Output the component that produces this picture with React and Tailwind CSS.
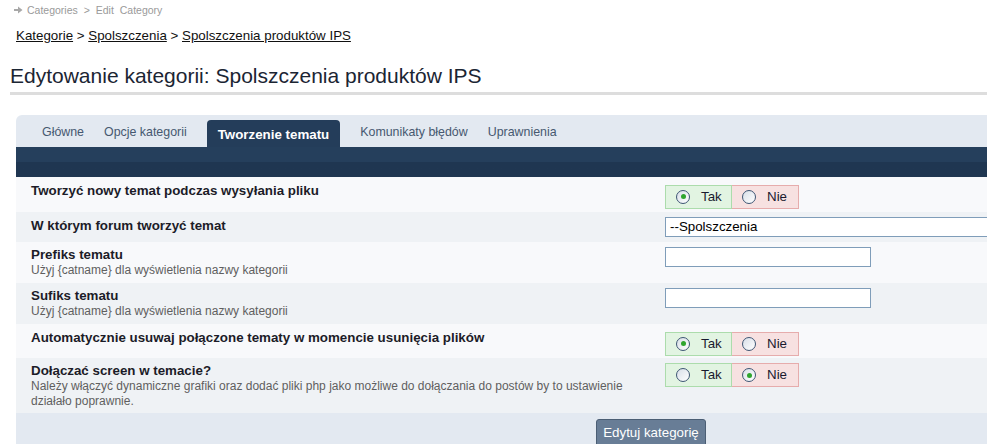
import React from "react";

const TABS = [
  { label: "Główne" },
  { label: "Opcje kategorii" },
  { label: "Tworzenie tematu", active: true },
  { label: "Komunikaty błędów" },
  { label: "Uprawnienia" },
];

const Radio = ({ checked }) => (
  <span className="inline-flex w-[14px] h-[14px] rounded-full border border-[#3e5674] bg-gradient-to-br from-[#d8dfe8] to-white items-center justify-center">
    {checked && <span className="w-[5px] h-[5px] rounded-full bg-[#2fa52f]" />}
  </span>
);

const YesNo = ({ value }) => (
  <div className="inline-flex h-[24px] text-[13.33px] text-[#1a1a2e]">
    <label className="flex items-center gap-[11px] w-[67px] pl-[10px] bg-[#e2f4e2] border border-[#acdcac]">
      <Radio checked={value} />
      Tak
    </label>
    <label className="flex items-center gap-[11px] w-[67px] pl-[10px] bg-[#f7e1e1] border border-l-0 border-[#e6acac]">
      <Radio checked={!value} />
      Nie
    </label>
  </div>
);

const Label = ({ title, desc }) => (
  <div>
    <div className="text-[13.33px] font-bold text-[#1c1c28] leading-[16px]">{title}</div>
    {desc && <div className="text-[12px] text-[#5f5f5f] leading-[15px]">{desc}</div>}
  </div>
);

const ROWS = [
  { title: "Tworzyć nowy temat podczas wysyłania pliku", field: <YesNo value />, h: "h-[35px]" },
  {
    title: "W którym forum tworzyć temat",
    field: (
      <div className="w-[400px] h-[20px] border border-[#7f9db9] bg-white text-[13.33px] leading-[18px] px-[4px] text-black">
        --Spolszczenia
      </div>
    ),
    h: "h-[30px]",
  },
  {
    title: "Prefiks tematu",
    desc: "Użyj {catname} dla wyświetlenia nazwy kategorii",
    field: <div className="w-[206px] h-[20px] border border-[#7f9db9] bg-white" />,
    h: "h-[41px]",
  },
  {
    title: "Sufiks tematu",
    desc: "Użyj {catname} dla wyświetlenia nazwy kategorii",
    field: <div className="w-[206px] h-[20px] border border-[#7f9db9] bg-white" />,
    h: "h-[41px]",
  },
  { title: "Automatycznie usuwaj połączone tematy w momencie usunięcia plików", field: <YesNo value />, h: "h-[34px]" },
  {
    title: "Dołączać screen w temacie?",
    desc: "Należy włączyć dynamiczne grafiki oraz dodać pliki php jako możliwe do dołączania do postów by to ustawienie działało poprawnie.",
    field: <YesNo value={false} />,
    h: "h-[55px]",
  },
];

export default function App() {
  return (
    <div className="w-[987px] h-[444px] overflow-hidden bg-white" style={{ fontFamily: "'Liberation Sans', Arial, sans-serif" }}>
      <div className="pt-[3px] pl-[14px] flex items-center gap-[4px] text-[10.5px] leading-[14px] text-[#9a9a9a]">
        <svg width="9" height="8" viewBox="0 0 9 8">
          <path d="M0 3h4V0.5L8.5 4 4 7.5V5H0z" fill="#a8a8a8" />
        </svg>
        <span className="[word-spacing:3px]">Categories &gt; Edit Category</span>
      </div>

      <div className="mt-[11px] pl-[16px] text-[13.33px] leading-[16px] text-[#111]">
        <a className="underline">Kategorie</a> &gt; <a className="underline">Spolszczenia</a> &gt;{" "}
        <a className="underline">Spolszczenia produktów IPS</a>
      </div>

      <h1 className="mt-[20px] ml-[10px] pb-[4px] border-b-[3px] border-[#dddddd] text-[21px] leading-[24px] text-[#1b2533]">
        Edytowanie kategorii: Spolszczenia produktów IPS
      </h1>

      <div className="mt-[20px] ml-[16px] w-[1270px]">
        <div className="h-[32px] bg-[#e3e9f1] rounded-tl-[6px] pl-[16px] flex items-end">
          {TABS.map((t) =>
            t.active ? (
              <div key={t.label} className="h-[27px] mx-[10px] px-[11px] bg-[#243d5a] rounded-t-[4px] text-white font-bold text-[13.33px] flex items-center pt-[3px]">
                {t.label}
              </div>
            ) : (
              <div key={t.label} className="h-[27px] px-[10px] text-[12.4px] text-[#465870] flex items-start pt-[3px]">
                {t.label}
              </div>
            )
          )}
        </div>
        <div className="h-[30px] bg-gradient-to-b from-[#253f5c] from-50% to-[#1f3651] to-50%" />

        {ROWS.map((r, i) => (
          <div key={i} className={`flex ${r.h} ${i % 2 === 0 ? "bg-[#f8f9fb]" : "bg-[#eff2f5]"}`}>
            <div className={`w-[649px] pl-[15px] pr-[10px] ${r.desc ? "pt-[5px]" : "pt-[6px]"}`}>
              <Label title={r.title} desc={r.desc} />
            </div>
            <div className="flex-1 pt-[5px]">{r.field}</div>
          </div>
        ))}

        <div className="h-[31px] bg-[#e3e9f1] pt-[6px] pl-[580px]">
          <button className="w-[110px] h-[28px] bg-[#687d96] border border-[#4b5e74] rounded-[3px] text-white text-[13.33px]">
            Edytuj kategorię
          </button>
        </div>
      </div>
    </div>
  );
}
